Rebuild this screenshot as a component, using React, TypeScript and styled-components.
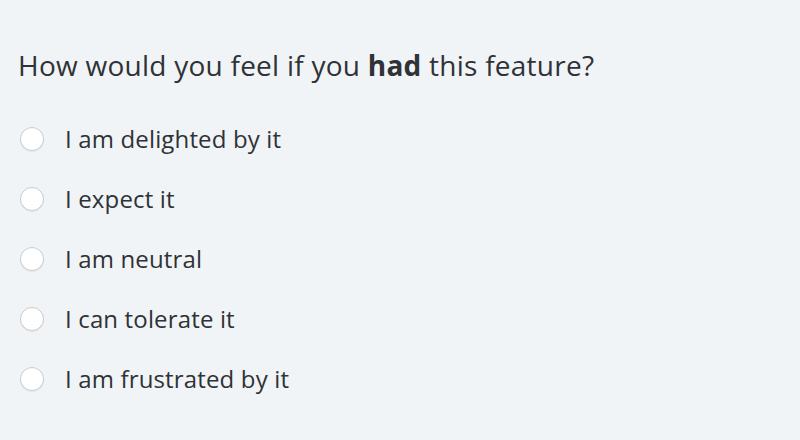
import React from "react";
import styled, { createGlobalStyle } from "styled-components";

const Global = createGlobalStyle`
  html, body { margin: 0; padding: 0; background: #f1f4f7; }
  body { font-family: "Open Sans", "Noto Sans", sans-serif; color: #32363a; }
`;

const Page = styled.div`
  width: 800px;
  height: 440px;
  box-sizing: border-box;
  padding: 45px 18px 0 18px;
  background: #f1f4f7;
`;

const Question = styled.h1`
  margin: 0 0 33px 0;
  font-size: 28px;
  font-weight: 400;
  line-height: 40px;
  letter-spacing: 0.25px;
  color: #2f3236;
  b { font-weight: 700; }
`;

const Options = styled.div`
  display: flex;
  flex-direction: column;
  gap: 20px;
`;

const Option = styled.label`
  display: flex;
  align-items: center;
  height: 40px;
  gap: 21px;
  font-size: 24px;
  letter-spacing: 0.15px;
  color: #2f3236;
  cursor: pointer;
`;

const Radio = styled.span`
  width: 22px;
  height: 22px;
  margin-left: 2px;
  margin-top: 2px;
  border-radius: 50%;
  background: #fff;
  border: 1px solid #c8ccd0;
  box-shadow: 0 1px 1px rgba(0, 0, 0, 0.06);
  flex-shrink: 0;
`;

const options = [
  "I am delighted by it",
  "I expect it",
  "I am neutral",
  "I can tolerate it",
  "I am frustrated by it",
];

export default function App() {
  return (
    <Page>
      <Global />
      <Question>
        How would you feel if you <b>had</b> this feature?
      </Question>
      <Options>
        {options.map((o) => (
          <Option key={o}>
            <Radio />
            {o}
          </Option>
        ))}
      </Options>
    </Page>
  );
}
